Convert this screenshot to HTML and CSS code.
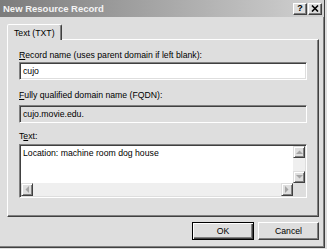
FILE: index.html
```html
<!DOCTYPE html>
<html lang="en">
<head>
    <meta charset="UTF-8">
    <title>New Resource Record</title>
    <link rel="stylesheet" href="styles.css">
</head>
<body>
    <div class="window">
        <div class="titlebar">
            <span class="title">New Resource Record</span>
            <div class="title-buttons">
                <span class="tbtn help">?</span>
                <span class="tbtn">
                    <svg width="8" height="7" viewBox="0 0 8 7"><path d="M1 0.5 L7 6.5 M7 0.5 L1 6.5" stroke="#000" stroke-width="1.6"/></svg>
                </span>
            </div>
        </div>

        <div class="body">
            <div class="tabs">
                <div class="tab">Text (TXT)</div>
            </div>
            <div class="panel">
                <label class="label"><u>R</u>ecord name (uses parent domain if left blank):</label>
                <div class="input">cujo</div>

                <label class="label fqdn-label"><u>F</u>ully qualified domain name (FQDN):</label>
                <div class="input readonly">cujo.movie.edu.</div>

                <label class="label text-label">T<u>e</u>xt:</label>
                <div class="textbox">
                    <div class="textbox-content">Location: machine room dog house</div>
                    <div class="vscroll">
                        <span class="sbtn">
                            <svg width="7" height="4" viewBox="0 0 7 4"><polygon points="0,4 3.5,0.5 7,4" fill="#a4a4a4"/></svg>
                        </span>
                        <span class="track"></span>
                        <span class="sbtn">
                            <svg width="7" height="4" viewBox="0 0 7 4"><polygon points="0,0 3.5,3.5 7,0" fill="#a4a4a4"/></svg>
                        </span>
                    </div>
                    <div class="hscroll">
                        <span class="sbtn">
                            <svg width="4" height="7" viewBox="0 0 4 7"><polygon points="4,0 0.5,3.5 4,7" fill="#a4a4a4"/></svg>
                        </span>
                        <span class="track"></span>
                        <span class="sbtn">
                            <svg width="4" height="7" viewBox="0 0 4 7"><polygon points="0,0 3.5,3.5 0,7" fill="#a4a4a4"/></svg>
                        </span>
                    </div>
                    <div class="corner"></div>
                </div>
            </div>

            <div class="buttons">
                <button class="btn default">OK</button>
                <button class="btn cancel">Cancel</button>
            </div>
        </div>
    </div>
</body>
</html>
```

FILE: styles.css
```css
body {
    margin: 0;
    background-color: #dedede;
    font-family: "Liberation Sans", Arial, sans-serif;
    font-size: 8.7px;
    color: #000;
}

.window {
    width: 325px;
    height: 248px;
    box-sizing: border-box;
    background-color: #dedede;
    border-right: 1px solid #404040;
    border-bottom: 1px solid #404040;
    box-shadow: inset -1px -1px #808080;
}

/* title bar (inactive window gradient) */
.titlebar {
    height: 17px;
    display: flex;
    align-items: center;
    padding-left: 3px;
    background: linear-gradient(to right, #7c7c7c, #d2d2d2);
}

.title {
    flex: 1;
    font-weight: bold;
    font-size: 9.5px;
    color: #f4f4f4;
}

.title-buttons {
    display: flex;
    gap: 1px;
    margin-right: 2px;
}

.tbtn {
    width: 14px;
    height: 12px;
    box-sizing: border-box;
    background-color: #dedede;
    border: 1px solid;
    border-color: #fff #404040 #404040 #fff;
    box-shadow: inset -1px -1px #808080;
    display: flex;
    align-items: center;
    justify-content: center;
}

.tbtn.help {
    font-weight: bold;
    font-size: 9px;
    line-height: 1;
}

.body {
    padding: 7px 5px 0 7px;
}

/* tab strip */
.tabs {
    display: flex;
    height: 16px;
    margin-bottom: -1px;
    position: relative;
    z-index: 1;
}

.tab {
    width: 55px;
    box-sizing: border-box;
    border: 1px solid;
    border-bottom: none;
    border-color: #fff #404040 transparent #fff;
    border-radius: 2px 2px 0 0;
    box-shadow: inset -1px 0 #808080;
    background-color: #dedede;
    display: flex;
    align-items: center;
    padding-left: 6px;
}

.panel {
    height: 178px;
    box-sizing: border-box;
    border: 1px solid;
    border-color: #fff #404040 #404040 #fff;
    box-shadow: inset -1px -1px #808080;
    padding: 10px 11px 0 11px;
}

.label {
    display: block;
    height: 11px;
    line-height: 11px;
}

.fqdn-label {
    margin-top: 10px;
}

.text-label {
    margin-top: 8px;
}

.input {
    height: 18px;
    box-sizing: border-box;
    margin-top: 1px;
    border: 1px solid;
    border-color: #808080 #fff #fff #808080;
    box-shadow: inset 1px 1px #404040, inset -1px -1px #dedede;
    background-color: #fff;
    padding-left: 3px;
    display: flex;
    align-items: center;
}

.input.readonly {
    margin-top: 4px;
    background-color: #dedede;
}

/* multiline text box with scrollbars */
.textbox {
    height: 54px;
    margin-top: 2px;
    box-sizing: border-box;
    border: 1px solid;
    border-color: #808080 #fff #fff #808080;
    box-shadow: inset 1px 1px #404040, inset -1px -1px #dedede;
    background-color: #fff;
    padding: 1px;
    display: grid;
    grid-template-columns: 1fr 12px;
    grid-template-rows: 1fr 13px;
}

.textbox-content {
    padding: 2px 2px 0 2px;
    line-height: 11px;
}

.vscroll {
    display: flex;
    flex-direction: column;
}

.hscroll {
    display: flex;
}

.track {
    flex: 1;
    background-color: #efefef;
}

.sbtn {
    width: 12px;
    height: 12px;
    box-sizing: border-box;
    background-color: #dedede;
    border: 1px solid;
    border-color: #dedede #404040 #404040 #dedede;
    box-shadow: inset 1px 1px #fff, inset -1px -1px #808080;
    display: flex;
    align-items: center;
    justify-content: center;
}

.hscroll .sbtn {
    height: 13px;
}

.corner {
    background-color: #dedede;
}

/* dialog buttons */
.buttons {
    display: flex;
    justify-content: flex-end;
    gap: 4px;
    margin-top: 5px;
}

.btn {
    width: 61px;
    height: 18px;
    box-sizing: border-box;
    padding: 0;
    font: inherit;
    color: #000;
    background-color: #dedede;
    border: 1px solid;
    border-color: #fff #404040 #404040 #fff;
    box-shadow: inset -1px -1px #808080;
}

.btn.default {
    width: 62px;
    border-color: #000;
    box-shadow: inset 1px 1px #fff, inset -1px -1px #404040, inset -2px -2px #808080;
}
```
